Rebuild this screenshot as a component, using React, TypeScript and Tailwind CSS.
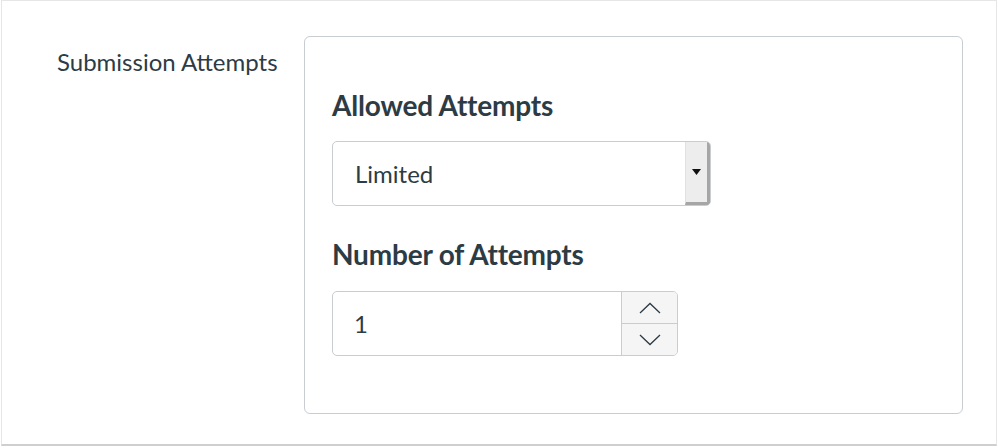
import React from "react";

export default function App() {
  return (
    <div className="w-[998px] h-[448px] bg-white" style={{ fontFamily: "Lato, 'Noto Sans', sans-serif" }}>
      <div className="ml-[1px] w-[996px] h-[446px] border-t border-l border-r border-[#e6e6e6] border-b-2 border-b-[#cfcfcf] flex text-[#2d3b45]">
        <div className="w-[302px] pl-[55px] pt-[47px] text-[24px] leading-[28px] shrink-0">
          Submission Attempts
        </div>
        <div className="mt-[35px] w-[659px] h-[378px] border border-[#c7cdd1] rounded-[6px] pl-[27px] pt-[52px]">
          <div className="text-[28px] font-bold leading-[32px] tracking-[-0.2px]">Allowed Attempts</div>
          <div className="mt-[20px] w-[379px] h-[65px] border border-[#c7cdd1] rounded-[5px] flex overflow-hidden">
            <div className="flex-1 flex items-center pl-[22px] text-[24px]">Limited</div>
            <div className="w-[25px] bg-[#ededed] border-l border-l-[#e0e0e0] border-r-[3px] border-r-[#a6a6a6] border-b-[3px] border-b-[#a6a6a6] flex items-center justify-center">
              <svg width="9" height="6" viewBox="0 0 9 6"><path d="M0 0H9L4.5 6Z" fill="#111" /></svg>
            </div>
          </div>
          <div className="mt-[32px] text-[28px] font-bold leading-[32px] tracking-[-0.2px]">Number of Attempts</div>
          <div className="mt-[21px] w-[346px] h-[65px] border border-[#c7cdd1] rounded-[5px] flex overflow-hidden">
            <div className="flex-1 flex items-center pl-[21px] text-[24px]">1</div>
            <div className="w-[56px] border-l border-[#c7cdd1] bg-[#f5f5f5] flex flex-col">
              <div className="flex-1 flex items-center justify-center border-b border-[#c7cdd1]">
                <svg width="22" height="12" viewBox="0 0 22 12"><path d="M1 11L11 1.5L21 11" fill="none" stroke="#2d3b45" strokeWidth="1.3" /></svg>
              </div>
              <div className="flex-1 flex items-center justify-center">
                <svg width="22" height="12" viewBox="0 0 22 12"><path d="M1 1L11 10.5L21 1" fill="none" stroke="#2d3b45" strokeWidth="1.3" /></svg>
              </div>
            </div>
          </div>
        </div>
      </div>
    </div>
  );
}
